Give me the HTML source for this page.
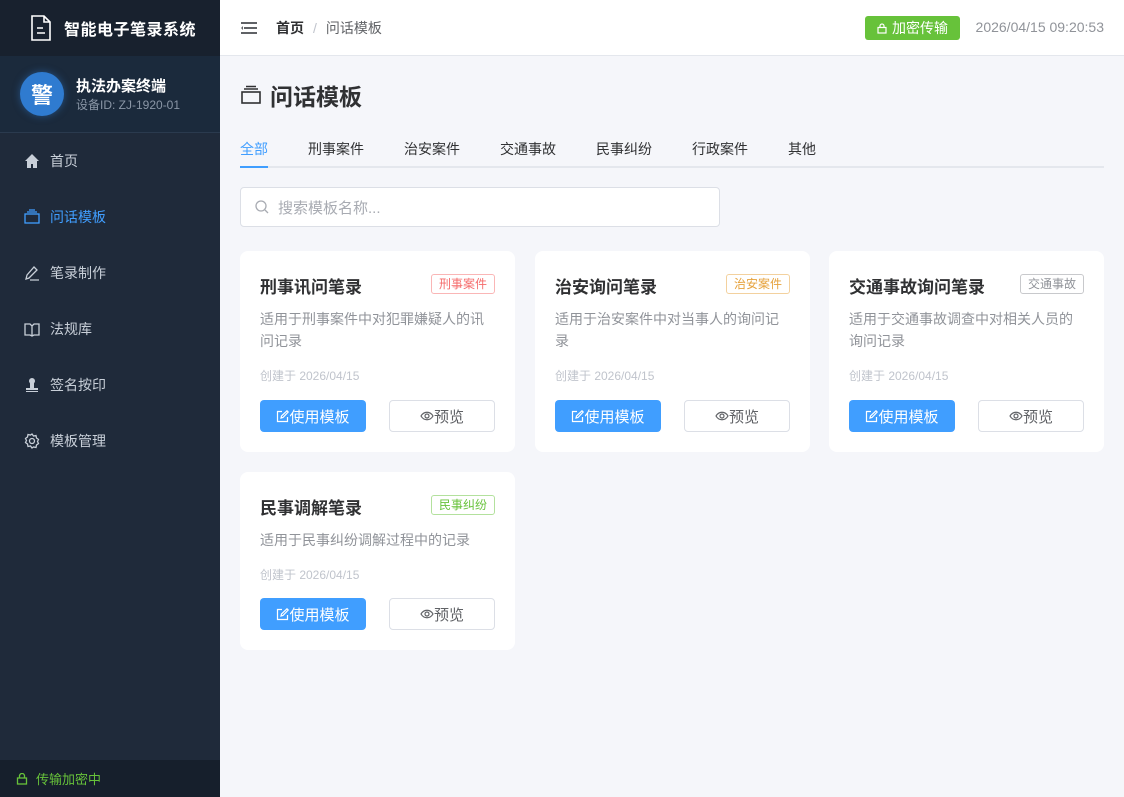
<!DOCTYPE html><html><head><meta charset="utf-8"><style>
*{box-sizing:border-box;margin:0;padding:0}
body{width:1124px;height:797px;overflow:hidden;font-family:"Liberation Sans","Noto Sans CJK SC",sans-serif;background:#f5f6fa;position:relative}
.side{position:absolute;left:0;top:0;width:220px;height:797px;background:#1f2a3a}
.logo{height:56px;background:#18212e;display:flex;align-items:center;padding-left:30px;color:#fff;font-weight:bold;font-size:16px;letter-spacing:0.5px}
.user{height:77px;background:#1b2a3c;border-bottom:1px solid #2a3a4e;display:flex;align-items:center;padding-left:20px}
.av{width:44px;height:44px;border-radius:50%;background:#2f7bd0;color:#fff;font-weight:bold;font-size:22px;display:flex;align-items:center;justify-content:center;box-shadow:0 0 8px rgba(47,123,208,.5)}
.un{margin-left:12px}.un b{color:#fff;font-size:15px;display:block}.un span{color:#8a96a6;font-size:12px}
.mi{height:56px;display:flex;align-items:center;padding-left:24px;color:#c8cfd8;font-size:14px}
.mi svg{margin-right:10px}
.mi.on{color:#409eff}
.foot{position:absolute;bottom:0;left:0;width:220px;height:37px;background:#161f2c;color:#67c23a;font-size:13px;display:flex;align-items:center;padding-left:16px}
.top{position:absolute;left:220px;top:0;right:0;height:56px;background:#fff;border-bottom:1px solid #e4e7ed;display:flex;align-items:center;padding-left:20px}
.bc{margin-left:18px;font-size:14px;color:#606266}.bc b{color:#303133}
.enc{position:absolute;right:164px;top:16px;height:24px;background:#67c23a;color:#fff;font-size:14px;border-radius:3px;padding:0 12px 0 12px;display:flex;align-items:center}
.time{position:absolute;right:20px;top:19px;color:#909399;font-size:14px}
.h1{position:absolute;left:240px;top:78px;font-size:23px;font-weight:bold;color:#303133;display:flex;align-items:center}
.tabs{position:absolute;left:240px;top:132px;width:864px;height:36px;border-bottom:2px solid #e4e7ed;display:flex}
.tab{font-size:14px;color:#303133;margin-right:40px;height:36px;line-height:34px}
.tab.on{color:#409eff;border-bottom:2px solid #409eff}
.search{position:absolute;left:240px;top:187px;width:480px;height:40px;border:1px solid #dcdfe6;border-radius:4px;background:#fff;display:flex;align-items:center;padding-left:14px;color:#a8abb2;font-size:15px}
.card{position:absolute;width:275px;background:#fff;border-radius:8px;padding:20px}
.ct{font-size:17px;font-weight:bold;color:#303133;margin-top:2px}
.tag{position:absolute;right:20px;top:23px;height:20px;font-size:12px;padding:0 7px;border:1px solid;border-radius:3px;line-height:18px}
.cd{font-size:14px;color:#909399;line-height:22px;margin-top:10px;height:44px}
.cdate{font-size:12px;color:#c0c4cc;margin-top:15px}
.btns{position:absolute;left:20px;bottom:20px;right:20px;display:flex;justify-content:space-between}
.b1,.b2{width:106px;height:32px;border-radius:4px;font-size:15px;display:flex;align-items:center;justify-content:center}
.b1{background:#409eff;color:#fff}.b2{border:1px solid #dcdfe6;color:#606266}
</style></head><body>
<div class="side">
<div class="logo"><svg width="22" height="26" viewBox="0 0 22 26" fill="none" stroke="#fff" stroke-width="1.6"><path d="M2 1h12l6 6v18H2z M14 1v6h6 M7 13h6 M7 18h8"/></svg><span style="margin-left:12px">智能电子笔录系统</span></div>
<div class="user"><div class="av">警</div><div class="un"><b>执法办案终端</b><span>设备ID: ZJ-1920-01</span></div></div>
<div class="mi"><svg width="16" height="16" viewBox="0 0 16 16"><path d="M1 8L8 1l7 7h-2v7h-4v-4H7v4H3V8z" fill="#c8cfd8"/></svg>首页</div>
<div class="mi on"><svg width="16" height="16" viewBox="0 0 16 16" fill="none" stroke="#409eff" stroke-width="1.3"><rect x="1" y="5" width="14" height="9"/><path d="M3 3h10M5 1h6"/></svg>问话模板</div>
<div class="mi"><svg width="16" height="16" viewBox="0 0 16 16" fill="none" stroke="#c8cfd8" stroke-width="1.3"><path d="M2 14l1-4 7-8 3 3-8 8z M6 15h9"/></svg>笔录制作</div>
<div class="mi"><svg width="16" height="16" viewBox="0 0 16 16" fill="none" stroke="#c8cfd8" stroke-width="1.3"><path d="M1 3h5l2 2 2-2h5v11h-5l-2 1-2-1H1z M8 5v10"/></svg>法规库</div>
<div class="mi"><svg width="16" height="16" viewBox="0 0 16 16"><circle cx="8" cy="4" r="3" fill="#c8cfd8"/><rect x="6" y="6" width="4" height="5" fill="#c8cfd8"/><rect x="2" y="11" width="12" height="2" fill="#c8cfd8"/><rect x="2" y="14" width="12" height="1" fill="#c8cfd8"/></svg>签名按印</div>
<div class="mi"><svg width="16" height="16" viewBox="0 0 16 16" fill="none" stroke="#c8cfd8" stroke-width="1.3"><circle cx="8" cy="8" r="2.5"/><path d="M8 1l1.5 2 2.5-.5.5 2.5 2 1.5-1 2 1 2-2 1.5-.5 2.5-2.5-.5L8 15l-1.5-2-2.5.5-.5-2.5-2-1.5 1-2-1-2 2-1.5.5-2.5 2.5.5z"/></svg>模板管理</div>
<div class="foot"><svg width="12" height="12" viewBox="0 0 12 12" fill="none" stroke="#67c23a" stroke-width="1.3" style="margin-right:8px"><rect x="1.5" y="5" width="9" height="6"/><path d="M3.5 5V3a2.5 2.5 0 0 1 5 0v2"/></svg>传输加密中</div>
</div>
<div class="top"><svg width="18" height="16" viewBox="0 0 18 16" fill="#606266"><rect x="1" y="2" width="16" height="2"/><rect x="4" y="7" width="13" height="2"/><rect x="1" y="12" width="16" height="2"/><path d="M1 8l2-2v4z"/></svg><div class="bc"><b>首页</b><span style="color:#c0c4cc;margin:0 9px">/</span>问话模板</div></div>
<div class="enc"><svg width="10" height="11" viewBox="0 0 10 11" fill="none" stroke="#fff" stroke-width="1.2" style="margin-right:5px"><rect x="1" y="4.5" width="8" height="5.5"/><path d="M3 4.5V3a2 2 0 0 1 4 0v1.5"/></svg>加密传输</div>
<div class="time">2026/04/15 09:20:53</div>
<div class="h1"><svg width="22" height="20" viewBox="0 0 22 20" fill="none" stroke="#303133" stroke-width="1.6" style="margin-right:8px"><rect x="2" y="7" width="18" height="11"/><path d="M4 4h14M6 1.5h10"/></svg>问话模板</div>
<div class="tabs"><div class="tab on">全部</div><div class="tab">刑事案件</div><div class="tab">治安案件</div><div class="tab">交通事故</div><div class="tab">民事纠纷</div><div class="tab">行政案件</div><div class="tab">其他</div></div>
<div class="search"><svg width="14" height="14" viewBox="0 0 14 14" fill="none" stroke="#a8abb2" stroke-width="1.3"><circle cx="6" cy="6" r="5"/><path d="M10 10l3 3"/></svg><span style="margin-left:9px">搜索模板名称...</span></div>

<div class="card" style="left:240px;top:251px;height:201px"><div class="ct">刑事讯问笔录</div><div class="tag" style="color:#f56c6c;border-color:#fab6b6">刑事案件</div><div class="cd">适用于刑事案件中对犯罪嫌疑人的讯问记录</div><div class="cdate">创建于 2026/04/15</div><div class="btns"><div class="b1"><svg width="13" height="13" viewBox="0 0 13 13" fill="none" stroke="#fff" stroke-width="1.2"><path d="M6 1.5H1.5v10h10V7"/><path d="M5 8l.5-2L11 .8l1.2 1.2L7 7.5z"/></svg>使用模板</div><div class="b2"><svg width="14" height="10" viewBox="0 0 14 10" fill="none" stroke="#606266" stroke-width="1.2"><path d="M1 5c3-5 9-5 12 0-3 5-9 5-12 0z"/><circle cx="7" cy="5" r="2"/></svg>预览</div></div></div>
<div class="card" style="left:535px;top:251px;height:201px"><div class="ct">治安询问笔录</div><div class="tag" style="color:#e6a23c;border-color:#f3d19e">治安案件</div><div class="cd">适用于治安案件中对当事人的询问记录</div><div class="cdate">创建于 2026/04/15</div><div class="btns"><div class="b1"><svg width="13" height="13" viewBox="0 0 13 13" fill="none" stroke="#fff" stroke-width="1.2"><path d="M6 1.5H1.5v10h10V7"/><path d="M5 8l.5-2L11 .8l1.2 1.2L7 7.5z"/></svg>使用模板</div><div class="b2"><svg width="14" height="10" viewBox="0 0 14 10" fill="none" stroke="#606266" stroke-width="1.2"><path d="M1 5c3-5 9-5 12 0-3 5-9 5-12 0z"/><circle cx="7" cy="5" r="2"/></svg>预览</div></div></div>
<div class="card" style="left:829px;top:251px;height:201px"><div class="ct">交通事故询问笔录</div><div class="tag" style="color:#909399;border-color:#c8c9cc">交通事故</div><div class="cd">适用于交通事故调查中对相关人员的询问记录</div><div class="cdate">创建于 2026/04/15</div><div class="btns"><div class="b1"><svg width="13" height="13" viewBox="0 0 13 13" fill="none" stroke="#fff" stroke-width="1.2"><path d="M6 1.5H1.5v10h10V7"/><path d="M5 8l.5-2L11 .8l1.2 1.2L7 7.5z"/></svg>使用模板</div><div class="b2"><svg width="14" height="10" viewBox="0 0 14 10" fill="none" stroke="#606266" stroke-width="1.2"><path d="M1 5c3-5 9-5 12 0-3 5-9 5-12 0z"/><circle cx="7" cy="5" r="2"/></svg>预览</div></div></div>
<div class="card" style="left:240px;top:472px;height:178px"><div class="ct">民事调解笔录</div><div class="tag" style="color:#67c23a;border-color:#b3e19d">民事纠纷</div><div class="cd" style="height:22px">适用于民事纠纷调解过程中的记录</div><div class="cdate">创建于 2026/04/15</div><div class="btns"><div class="b1"><svg width="13" height="13" viewBox="0 0 13 13" fill="none" stroke="#fff" stroke-width="1.2"><path d="M6 1.5H1.5v10h10V7"/><path d="M5 8l.5-2L11 .8l1.2 1.2L7 7.5z"/></svg>使用模板</div><div class="b2"><svg width="14" height="10" viewBox="0 0 14 10" fill="none" stroke="#606266" stroke-width="1.2"><path d="M1 5c3-5 9-5 12 0-3 5-9 5-12 0z"/><circle cx="7" cy="5" r="2"/></svg>预览</div></div></div>
</body></html>
